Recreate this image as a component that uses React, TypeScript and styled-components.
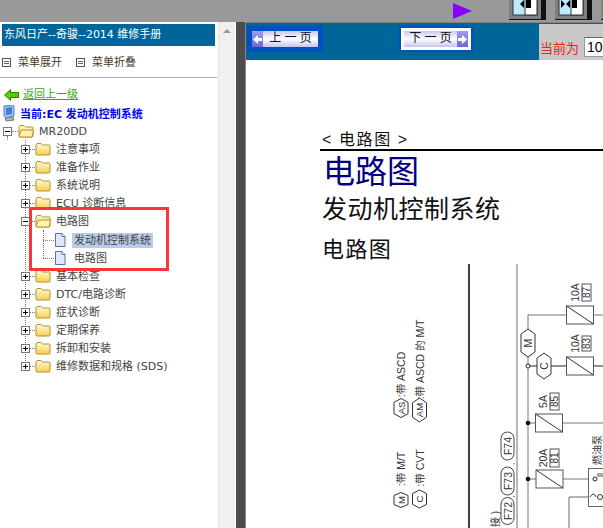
import React from "react";
import styled, { createGlobalStyle } from "styled-components";

const GlobalStyle = createGlobalStyle`
  html, body {
    margin: 0;
    padding: 0;
    height: 100%;
    overflow: hidden;
    background: #fff;
  }
  #root {
    height: 100%;
  }
  * {
    box-sizing: border-box;
  }
`;

const FONT = `"Liberation Sans", "Noto Sans CJK SC", sans-serif`;
const TREE_FONT = `"DejaVu Sans", "Noto Sans CJK SC", sans-serif`;

const Page = styled.div`
  width: 603px;
  height: 528px;
  display: flex;
  flex-direction: column;
  overflow: hidden;
  font-family: ${TREE_FONT};
  font-size: 11px;
  color: #333;
`;

const TopBar = styled.div`
  height: 22px;
  flex: none;
  background: #999;
  display: flex;
  align-items: flex-start;
  padding-left: 453px;
  overflow: hidden;
`;

const PlayMark = styled.svg`
  width: 20px;
  height: 16px;
  margin-top: 3px;
  margin-right: 36px;
  flex: none;
`;

const ToolButton = styled.svg`
  width: 37px;
  height: 20px;
  margin-right: 9px;
  flex: none;
`;

const Body = styled.div`
  flex: 1;
  min-height: 0;
  display: flex;
`;

const Sidebar = styled.div`
  width: 218px;
  flex: none;
  position: relative;
  background: #fff;
  padding-top: 2px;
  overflow: hidden;
`;

const Scrollbar = styled.div`
  width: 17px;
  flex: none;
  background: #f0f0f0;
  border-left: 1px solid #e6e6e6;
  display: flex;
  justify-content: center;
  padding-top: 7px;
`;

const ScrollArrow = styled.div`
  width: 0;
  height: 0;
  border-left: 4px solid transparent;
  border-right: 4px solid transparent;
  border-bottom: 4px solid #9a9a9a;
`;

const Gutter = styled.div`
  width: 10px;
  flex: none;
  margin-left: 1px;
  background: #4d4d4d;
  border-right: 1px solid #888;
`;

const BookTitle = styled.div`
  height: 22px;
  margin: 0 3px 0 2px;
  padding-left: 2px;
  background: #006699;
  color: #fff;
  line-height: 21px;
  white-space: nowrap;
`;

const MenuRow = styled.div`
  height: 29px;
  display: flex;
  align-items: center;
  padding: 1px 0 0 2px;
`;

const MenuAction = styled.span`
  display: inline-flex;
  align-items: center;
  gap: 7px;
  width: 74px;
  color: #4a3a2a;
`;

const MenuIcon = styled.span`
  width: 9px;
  height: 9px;
  border: 1px solid #555;
  background: repeating-linear-gradient(#666 0 1px, #fff 1px 2px);
  background-clip: content-box;
  padding: 1px;
  margin-top: 2px;
`;

const Divider = styled.hr`
  margin: 2px 1px 0 0;
  height: 1px;
  border: 0;
  background: #a8a8a8;
`;

const BackRow = styled.div`
  height: 19px;
  margin-top: 7px;
  display: flex;
  align-items: center;
  padding-left: 4px;
  gap: 4px;
`;

const BackLink = styled.a`
  color: #3aa50a;
  text-decoration: underline;
  line-height: 15px;
`;

const CurrentRow = styled.div`
  height: 18px;
  display: flex;
  align-items: center;
  padding-left: 3px;
  gap: 5px;
  color: #0000ff;
  font-weight: bold;
  white-space: nowrap;
`;

const Tree = styled.div`
  position: relative;
`;

const Guide = styled.div<{ $left: number; $top: number; $height: number }>`
  position: absolute;
  left: ${(p) => p.$left}px;
  top: ${(p) => p.$top}px;
  height: ${(p) => p.$height}px;
  width: 1px;
  border-left: 1px dotted #777;
`;

const Row = styled.div<{ $indent: number }>`
  position: relative;
  height: 18px;
  display: flex;
  align-items: center;
  padding-left: ${(p) => p.$indent}px;
  white-space: nowrap;
  color: #444;
`;

const PageRows = styled.div`
  padding-top: 1px;
`;

const ToggleBox = styled.span`
  width: 9px;
  height: 9px;
  flex: none;
  border: 1px solid #777;
  background: #fff;
  position: relative;
  z-index: 1;
  &::before {
    content: "";
    position: absolute;
    left: 1px;
    right: 1px;
    top: 3px;
    height: 1px;
    background: #000;
  }
`;

const PlusBox = styled(ToggleBox)`
  &::after {
    content: "";
    position: absolute;
    top: 1px;
    bottom: 1px;
    left: 3px;
    width: 1px;
    background: #000;
  }
`;

const Dots = styled.span<{ $width: number }>`
  width: ${(p) => p.$width}px;
  flex: none;
  border-top: 1px dotted #777;
`;

const RootLabel = styled.span`
  margin-left: 5px;
  line-height: 15px;
`;

const ChapterLabel = styled.span`
  margin-left: 5px;
  line-height: 15px;
`;

const PageItemLabel = styled.span<{ $selected?: boolean }>`
  margin-left: ${(p) => (p.$selected ? 6 : 8)}px;
  padding: 0 ${(p) => (p.$selected ? 2 : 0)}px;
  line-height: 15px;
  background: ${(p) => (p.$selected ? "#b9cdea" : "transparent")};
`;

const Highlight = styled.div`
  position: absolute;
  left: 29px;
  top: 185px;
  width: 140px;
  height: 64px;
  border: 3px solid #fb3539;
  pointer-events: none;
`;

const Main = styled.div`
  flex: 1;
  min-width: 0;
  display: flex;
  flex-direction: column;
`;

const NavBar = styled.div`
  height: 38px;
  flex: none;
  background: #006699;
  display: flex;
  align-items: flex-start;
  padding: 3px 0 0 1px;
  border-top: 1px solid #808080;
`;

const NavButton = styled.button<{ $next?: boolean }>`
  width: ${(p) => (p.$next ? 74 : 76)}px;
  height: 26px;
  padding: 3px 3px;
  border: 2px solid #0050c0;
  border-radius: 0;
  background: ${(p) => (p.$next ? "#fff" : "#0050c0")};
  display: flex;
  flex-direction: ${(p) => (p.$next ? "row-reverse" : "row")};
  margin-left: ${(p) => (p.$next ? "76px" : "0")};
  font-family: ${FONT};
  font-size: 12px;
  color: #111;
`;

const ArrowCap = styled.span`
  width: 11px;
  background: linear-gradient(#9c9cf0, #6a6ad8);
  display: flex;
  align-items: center;
  justify-content: center;
  flex: none;
`;

const NavLabel = styled.span`
  flex: 1;
  background: linear-gradient(#c8c8f0, #ffffff 50%, #c4c4ee);
  line-height: 15px;
  text-align: center;
  white-space: pre;
`;

const PagePanel = styled.div`
  margin-left: auto;
  width: 64px;
  height: 36px;
  margin-top: -2px;
  background: #c8c8c8;
  display: flex;
  align-items: flex-end;
  gap: 5px;
  padding: 0 0 3px 1px;
  white-space: nowrap;
  font-family: ${FONT};
`;

const PageLabel = styled.span`
  color: #f02020;
  font-size: 13px;
  line-height: 17px;
`;

const PageInput = styled.input`
  width: 60px;
  height: 20px;
  flex: none;
  padding: 0 2px;
  border: 1px solid #999;
  border-top-color: #666;
  font-family: ${FONT};
  font-size: 14px;
  color: #000;
`;

const Content = styled.div`
  flex: 1;
  min-height: 0;
  background: #fff;
  overflow: hidden;
  padding: 71px 0 0 74px;
  font-family: ${FONT};
`;

const Breadcrumb = styled.div`
  height: 20px;
  border-bottom: 2px solid #000;
  font-size: 16px;
  letter-spacing: 1.6px;
  line-height: 17px;
  color: #111;
  padding-left: 2px;
  white-space: pre;
`;

const Heading = styled.h1`
  margin: 3px 0 0 3px;
  font-size: 32px;
  line-height: 36px;
  font-weight: normal;
  color: #000080;
`;

const SubHeading = styled.h2`
  margin: 0 0 0 2px;
  padding-top: 1px;
  font-size: 25px;
  line-height: 36px;
  font-weight: normal;
  color: #111;
  letter-spacing: 0.5px;
`;

const SectionHeading = styled.h3`
  margin: 8px 0 0 2px;
  font-size: 22px;
  line-height: 30px;
  font-weight: normal;
  color: #111;
  letter-spacing: 1.4px;
`;

const Diagram = styled.svg`
  display: block;
  margin: -1px 0 0 60px;
  width: 224px;
  height: 264px;
  font-family: ${FONT};
`;

const Folder = ({ open }: { open?: boolean }) => (
  <svg width="16" height="14" viewBox="0 0 16 14" style={{ flex: "none" }}>
    <defs>
      <linearGradient id="fold" x1="0" y1="0" x2="0" y2="1">
        <stop offset="0" stopColor="#fffbd8" />
        <stop offset="1" stopColor="#f6d050" />
      </linearGradient>
    </defs>
    <path
      d="M1 3 L2 1.5 H6 L7.5 3 H14 Q15 3 15 4 V12 Q15 13 14 13 H2 Q1 13 1 12 Z"
      fill="url(#fold)"
      stroke="#b8912a"
    />
    {open && <path d="M1 12 L3.5 6 H15.5 L14 13 H2 Z" fill="#fff3b0" stroke="#b8912a" />}
  </svg>
);

const DocIcon = () => (
  <svg width="12" height="14" viewBox="0 0 12 14" style={{ flex: "none" }}>
    <path d="M1.5 .5 H8 L11 3.5 V13.5 H1.5 Z" fill="#dfe8fb" stroke="#5b6fa8" />
    <path d="M8 .5 V3.5 H11" fill="#fff" stroke="#5b6fa8" />
  </svg>
);

const NavArrow = ({ next }: { next?: boolean }) => (
  <svg width="9" height="9" viewBox="0 0 9 9" style={next ? undefined : { transform: "scaleX(-1)" }}>
    <path d="M0 3 H4 V0 L9 4.5 L4 9 V6 H0 Z" fill="#fff" />
  </svg>
);

const chapters = [
  { name: "注意事项" },
  { name: "准备作业" },
  { name: "系统说明" },
  { name: "ECU 诊断信息" },
  {
    name: "电路图",
    open: true,
    pages: [{ name: "发动机控制系统", selected: true }, { name: "电路图" }],
  },
  { name: "基本检查" },
  { name: "DTC/电路诊断" },
  { name: "症状诊断" },
  { name: "定期保养" },
  { name: "拆卸和安装" },
  { name: "维修数据和规格 (SDS)" },
];

const RotText = ({ x, y, children, size = 10.5 }: { x: number; y: number; children: React.ReactNode; size?: number }) => (
  <text
    transform={`translate(${x} ${y}) rotate(-90)`}
    fontSize={size}
    fill="#333"
    textAnchor="middle"
    dominantBaseline="central"
  >
    {children}
  </text>
);

// coordinates below are page coordinates, the viewBox moves them into the svg
const Hex = ({ cx, cy, w, h, label }: { cx: number; cy: number; w: number; h: number; label: string }) => {
  const tip = Math.min(5, h / 5);
  return (
    <g>
      <path
        d={`M${cx} ${cy - h / 2} L${cx + w / 2} ${cy - h / 2 + tip} V${cy + h / 2 - tip} L${cx} ${cy + h / 2} L${cx - w / 2} ${cy + h / 2 - tip} V${cy - h / 2 + tip} Z`}
        fill="#fff"
        stroke="#333"
      />
      <RotText x={cx} y={cy} size={h < 25 ? 9.5 : 10.5}>
        {label}
      </RotText>
    </g>
  );
};

const Fuse = ({ x, y, w = 27, h = 18 }: { x: number; y: number; w?: number; h?: number }) => (
  <g>
    <rect x={x} y={y} width={w} height={h} fill="#fff" stroke="#555" />
    <path d={`M${x} ${y} L${x + w} ${y + h}`} stroke="#333" />
  </g>
);

const FuseTag = ({ x, y, h, amp, num }: { x: number; y: number; h: number; amp: string; num: string }) => (
  <g>
    <RotText x={x - 4} y={y + h / 2}>
      {amp}
    </RotText>
    <rect x={x + 3} y={y} width={9} height={h} fill="#fff" stroke="#555" />
    <RotText x={x + 7.5} y={y + h / 2} size={10}>
      {num}
    </RotText>
  </g>
);

const Pill = ({ cx, cy, h, label }: { cx: number; cy: number; h: number; label: string }) => (
  <g>
    <rect x={cx - 6.5} y={cy - h / 2} width={13} height={h} rx={6.5} fill="#fff" stroke="#444" />
    <RotText x={cx} y={cy}>
      {label}
    </RotText>
  </g>
);

const WiringDiagram = () => (
  <Diagram viewBox="380 264 224 264">
    <path d="M469 264 V528" stroke="#111" strokeWidth="1.6" />
    <path d="M517 264 V528" stroke="#999" strokeWidth="1.4" />
    <path d="M528 528 V315 H567 M593 315 H604" fill="none" stroke="#777" />
    <path d="M528 366 H604" stroke="#222" />
    <path d="M528 423 H604" stroke="#777" />
    <path d="M528 479 H590" stroke="#777" />
    <path d="M569 528 V497 H590" fill="none" stroke="#666" />

    <Fuse x={566.5} y={306} />
    <Fuse x={566.5} y={357} />
    <Fuse x={535.5} y={414} />
    <Fuse x={536} y={470} />

    <FuseTag x={579} y={284} h={17} amp="10A" num="87" />
    <FuseTag x={579} y={336} h={15} amp="10A" num="83" />
    <FuseTag x={547} y={393} h={17} amp="5A" num="85" />
    <FuseTag x={547} y={449} h={18} amp="20A" num="81" />

    <Hex cx={528} cy={343} w={14} h={28} label="M" />
    <Hex cx={544} cy={366} w={14} h={26} label="C" />
    <circle cx="528" cy="366" r="2" fill="#fff" stroke="#222" />
    <circle cx="528" cy="423" r="2.3" fill="#111" />
    <circle cx="528" cy="479" r="2.3" fill="#111" />

    <rect x="588.5" y="468.5" width="20" height="38" fill="#fff" stroke="#666" />
    <circle cx="595" cy="479" r="2" fill="#fff" stroke="#222" />
    <path d="M597 474 H604 M597 476 H604" stroke="#555" />
    <path d="M590 497 Q594 491 596 497" fill="none" stroke="#333" />
    <circle cx="600" cy="497" r="2.5" fill="none" stroke="#333" />
    <RotText x={597} y={450} size={10}>
      燃油泵
    </RotText>

    <Pill cx={507.5} cy={446} h={28} label="F74" />
    <Pill cx={507.5} cy={481} h={28} label="F73" />
    <Pill cx={507.5} cy={511} h={27} label="F72" />
    <RotText x={511} y={464} size={8}>
      ,
    </RotText>
    <RotText x={511} y={496.5} size={8}>
      ,
    </RotText>
    <RotText x={495} y={519} size={10}>
      接 )
    </RotText>

    <Hex cx={401} cy={408} w={14} h={19} label="AS" />
    <Hex cx={419.5} cy={410} w={14} h={24} label="AM" />
    <Hex cx={401} cy={500} w={14} h={15} label="M" />
    <Hex cx={419.5} cy={499} w={14} h={18} label="C" />
    <RotText x={401} y={374.5}>
      :带 ASCD
    </RotText>
    <RotText x={419.5} y={359.5}>
      :带 ASCD 的 M/T
    </RotText>
    <RotText x={401} y={469}>
      :带 M/T
    </RotText>
    <RotText x={419.5} y={468}>
      :带 CVT
    </RotText>
  </Diagram>
);

export default function App() {
  return (
    <Page>
      <GlobalStyle />
      <TopBar>
        <PlayMark viewBox="0 0 20 16">
          <path d="M0 0 L19 8 L0 16 Z" fill="#8800ff" />
        </PlayMark>
        {[1, 2, 1].map((arrows, i) => (
          <ToolButton key={i} viewBox="0 0 37 20">
            <rect width="37" height="20" fill="#808080" />
            <path d="M32 0 H37 V20 H0 V19 H32 Z" fill="#111" />
            <rect x="4" y="-1" width="24" height="16" fill="#bfeaff" stroke="#333" />
            <rect x="16" y="-1" width="12" height="16" fill="#fff" stroke="#333" />
            <path d="M17 0 H22 V8 H17 Z" fill="#000" />
            <path d={arrows === 2 ? "M15 0 V8 L11 4 Z M6 0 V8 L10 4 Z" : "M15 0 V8 L11 4 Z"} fill="#000" />
          </ToolButton>
        ))}
      </TopBar>
      <Body>
        <Sidebar>
          <BookTitle>东风日产--奇骏--2014 维修手册</BookTitle>
          <MenuRow>
            <MenuAction>
              <MenuIcon />
              菜单展开
            </MenuAction>
            <MenuAction>
              <MenuIcon />
              菜单折叠
            </MenuAction>
          </MenuRow>
          <Divider />
          <BackRow>
            <svg width="15" height="12" viewBox="0 0 15 12">
              <path d="M.5 6 L6.5 .7 V3.5 H14.5 V8.5 H6.5 V11.3 Z" fill="#55cc00" stroke="#2f7a00" />
            </svg>
            <BackLink>返回上一级</BackLink>
          </BackRow>
          <CurrentRow>
            <svg width="12" height="17" viewBox="0 0 12 17">
              <path d="M1 1 L9 0 L11 1 V11 L3 13 L1 11 Z" fill="#9fc4f0" stroke="#5b7fb0" />
              <path d="M3 3 L9 2 V9 L3 10 Z" fill="#3f7fd8" />
              <path d="M2 13 L10 12 L11 15 L3 16 Z" fill="#b8b8c8" stroke="#777" />
            </svg>
            当前:EC 发动机控制系统
          </CurrentRow>
          <Tree>
            <Guide $left={7} $top={14} $height={4} />
            <Guide $left={25} $top={18} $height={227} />
            <Guide $left={43} $top={108} $height={28} />
            <Row $indent={3}>
              <ToggleBox />
              <Dots $width={6} />
              <Folder open />
              <RootLabel>MR20DD</RootLabel>
            </Row>
            {chapters.map((c) => (
              <React.Fragment key={c.name}>
                <Row $indent={21}>
                  {c.open ? <ToggleBox /> : <PlusBox />}
                  <Dots $width={5} />
                  <Folder open={c.open} />
                  <ChapterLabel>{c.name}</ChapterLabel>
                </Row>
                {c.pages && (
                  <PageRows>
                    {c.pages.map((p) => (
                      <Row $indent={43} key={p.name}>
                        <Dots $width={11} />
                        <DocIcon />
                        <PageItemLabel $selected={p.selected}>{p.name}</PageItemLabel>
                      </Row>
                    ))}
                  </PageRows>
                )}
              </React.Fragment>
            ))}
          </Tree>
          <Highlight />
        </Sidebar>
        <Scrollbar>
          <ScrollArrow />
        </Scrollbar>
        <Gutter />
        <Main>
          <NavBar>
            <NavButton>
              <ArrowCap>
                <NavArrow />
              </ArrowCap>
              <NavLabel>上 一 页</NavLabel>
            </NavButton>
            <NavButton $next>
              <ArrowCap>
                <NavArrow next />
              </ArrowCap>
              <NavLabel>下 一 页</NavLabel>
            </NavButton>
            <PagePanel>
              <PageLabel>当前为</PageLabel>
              <PageInput defaultValue="109" />
            </PagePanel>
          </NavBar>
          <Content>
            <Breadcrumb>{"< 电路图 >"}</Breadcrumb>
            <Heading>电路图</Heading>
            <SubHeading>发动机控制系统</SubHeading>
            <SectionHeading>电路图</SectionHeading>
            <WiringDiagram />
          </Content>
        </Main>
      </Body>
    </Page>
  );
}
